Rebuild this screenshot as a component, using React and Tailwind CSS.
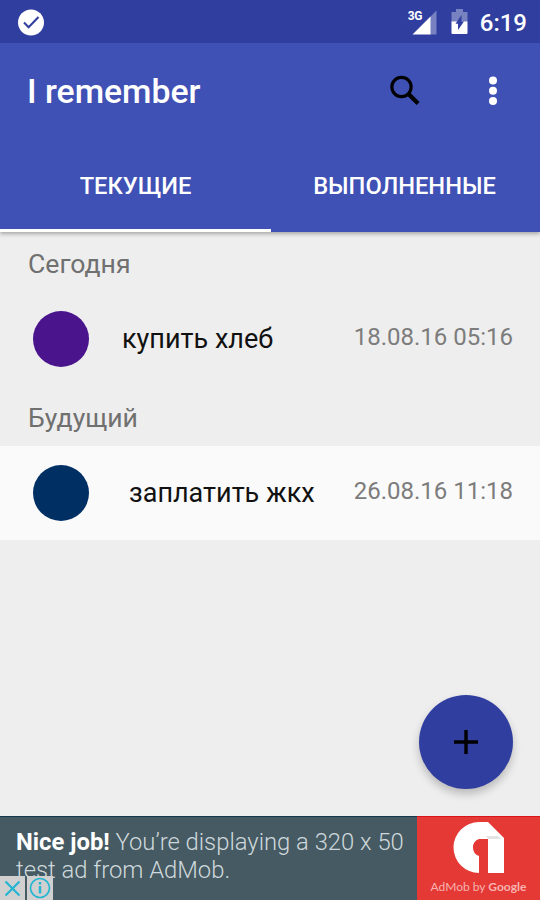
const sections = [
  {
    title: "Сегодня",
    items: [{ text: "купить хлеб", date: "18.08.16 05:16", dot: "bg-[#4a148c]", indent: "pl-[33px]", row: "" }],
  },
  {
    title: "Будущий",
    items: [{ text: "заплатить жкх", date: "26.08.16 11:18", dot: "bg-[#002f64]", indent: "pl-[40px]", row: "bg-[#fafafa]" }],
  },
];

function StatusBar() {
  return (
    <div className="flex h-[43px] items-center justify-between bg-[#303f9f] pl-[17px] pr-[13px] text-white">
      <svg className="h-7 w-7" viewBox="0 0 28 28">
        <circle cx="14" cy="14.5" r="13" fill="#fff" />
        <path d="M7 14.5l4.6 4.8L21.5 9" fill="none" stroke="#303f9f" strokeWidth="2" />
      </svg>
      <div className="flex items-center">
        <div className="relative mr-[14px] h-[34px] w-[30px]">
          <span className="absolute left-[1px] top-[4px] text-[12px] font-bold leading-[14px] tracking-[-0.5px]">3G</span>
          <svg className="absolute inset-0" width="30" height="34" viewBox="0 0 30 34">
            <path d="M29.5 5.5V29.5H23V12z" fill="#fff" fillOpacity="0.35" />
            <path d="M23.5 11.5V29.5H5.5z" fill="#fff" />
          </svg>
        </div>
        <svg className="mr-[12px]" width="17" height="25" viewBox="0 0 17 25">
          <path d="M5 0h7v3h4.5v10H.5V3H5z" fill="#fff" fillOpacity="0.35" />
          <path d="M.5 12.5h16V24a1 1 0 0 1-1 1h-14a1 1 0 0 1-1-1z" fill="#fff" />
          <path d="M10.5 6v6.5H13L7 21v-6.3H4.5z" fill="#303f9f" />
        </svg>
        <span className="pt-[3px] text-[24px] font-medium leading-none">6:19</span>
      </div>
    </div>
  );
}

function Toolbar() {
  return (
    <div className="flex h-[97px] items-center pl-[27px] pr-[42px] text-white">
      <h1 className="flex-1 text-[33.75px] font-medium leading-none tracking-normal">I remember</h1>
      <button type="button" aria-label="Search" className="-mt-[3px]">
        <svg width="31" height="31" viewBox="0 0 31 31" fill="none" stroke="#000">
          <circle cx="11.5" cy="12" r="9.6" strokeWidth="3.2" />
          <path d="M18.3 18.8l9.8 9.8" strokeWidth="4.2" />
        </svg>
      </button>
      <button type="button" aria-label="More" className="-mt-[2px] ml-[67px]">
        <svg width="10" height="30" viewBox="0 0 10 30" fill="#fff">
          <circle cx="5" cy="4.5" r="4" />
          <circle cx="5" cy="14.7" r="4" />
          <circle cx="5" cy="24.9" r="4" />
        </svg>
      </button>
    </div>
  );
}

function Tabs() {
  return (
    <div className="flex h-[92px] text-[23.7px] font-medium text-white">
      <button type="button" className="w-[271px] border-b-[3px] border-white pt-[5px]">
        ТЕКУЩИЕ
      </button>
      <button type="button" className="flex-1 border-b-[3px] border-transparent pr-[2px] pt-[5px]">
        ВЫПОЛНЕННЫЕ
      </button>
    </div>
  );
}

function Task({ item }) {
  return (
    <div className={`flex h-[94px] items-center pl-[33px] pr-[27px] ${item.row}`}>
      <span className={`h-14 w-14 rounded-full ${item.dot}`} />
      <span className={`flex-1 pt-px text-[27px] text-[#111] ${item.indent}`}>{item.text}</span>
      <span className="-mt-[5px] text-[24px] text-[#7c7c7c]">{item.date}</span>
    </div>
  );
}

function AdBanner() {
  return (
    <div className="relative flex h-[84px] bg-[#455a62] text-[#cfd8dc]">
      <div className="min-w-0 flex-1 border-t border-[#12384c] pl-[16px] pt-[11px] text-[23.8px] font-light leading-[28px]">
        <p className="whitespace-nowrap">
          <b className="font-bold text-white">Nice job!</b> You’re displaying a 320 x 50
        </p>
        <p>test ad from AdMob.</p>
      </div>
      <div className="flex w-[123px] shrink-0 flex-col items-center border-t border-[#d8141c] bg-[#e53935] pt-[5px]">
        <svg width="52" height="51" viewBox="0 0 52 51">
          <path d="M26 0H35L51 16V51H35V17H26A9 9 0 0 0 26 34V51A25.5 25.5 0 0 1 26 0z" fill="#fff" />
          <path d="M35 17h13l-3-3H33z" fill="#e4e4e4" />
        </svg>
        <span className="mt-[7px] whitespace-nowrap font-['Lato'] text-[12px] leading-[14px] text-[#f7b3b0]">
          AdMob by <span className="font-bold">Google</span>
        </span>
      </div>
      <div className="absolute bottom-0 left-0 flex h-[24px] gap-[2px]">
        <span className="flex w-[25px] items-center justify-center bg-[#d0d0d0]">
          <svg width="17" height="17" viewBox="0 0 17 17" stroke="#25b4d2" strokeWidth="2.2">
            <path d="M1.5 1.5l14 14M15.5 1.5l-14 14" />
          </svg>
        </span>
        <span className="flex w-[26px] items-center justify-center bg-[#d0d0d0]">
          <svg width="22" height="22" viewBox="0 0 22 22" fill="none" stroke="#25b4d2">
            <circle cx="11" cy="11" r="9.5" strokeWidth="1.7" />
            <path d="M11 9v7.5" strokeWidth="2.4" />
            <path d="M11 5v2.5" strokeWidth="2.4" />
          </svg>
        </span>
      </div>
    </div>
  );
}

function App() {
  return (
    <div className="relative flex h-[900px] w-[540px] flex-col overflow-hidden bg-[#eee] font-['Roboto',sans-serif]">
      <header className="z-10 bg-[#3f51b5] shadow-[0_2px_4px_rgba(0,0,0,0.3)]">
        <StatusBar />
        <Toolbar />
        <Tabs />
      </header>
      <main className="flex-1">
        {sections.map((section) => (
          <section key={section.title}>
            <h2 className="flex h-[60px] items-center pl-[28px] pt-[3px] text-[26.6px] text-[#707070]">{section.title}</h2>
            {section.items.map((item) => (
              <Task key={item.text} item={item} />
            ))}
          </section>
        ))}
      </main>
      <button
        type="button"
        aria-label="Add"
        className="absolute bottom-[111px] right-[27px] flex h-[94px] w-[94px] items-center justify-center rounded-full bg-[#303f9f] shadow-[0_5px_8px_rgba(0,0,0,0.22)]"
      >
        <svg width="24" height="24" viewBox="0 0 24 24" stroke="#000" strokeWidth="3.4">
          <path d="M12 0v24M0 12h24" />
        </svg>
      </button>
      <AdBanner />
    </div>
  );
}

export default App;
